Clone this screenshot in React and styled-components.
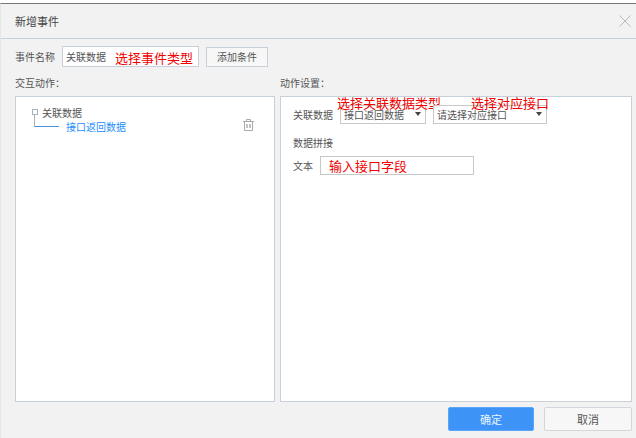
import styled, { createGlobalStyle } from "styled-components"

const cjk = `"Noto Sans CJK SC", "Liberation Sans", sans-serif`

const GlobalStyle = createGlobalStyle`
  html, body {
    margin: 0;
    padding: 0;
    background: #fff;
    font-family: ${cjk};
  }
`
const Dialog = styled.div`
  width: 636px;
  height: 438px;
  box-sizing: border-box;
  padding-top: 3px;
  background: #fff;
  overflow: hidden;
`
const Shell = styled.div`
  height: 435px;
  box-sizing: border-box;
  display: flex;
  flex-direction: column;
  background: #f2f2f2;
  border-top: 1px solid #777;
  border-left: 1px solid #e6e6e6;
`
const Header = styled.div`
  height: 35px;
  flex: none;
  box-sizing: border-box;
  display: flex;
  align-items: center;
  justify-content: space-between;
  padding: 0 4px 0 14px;
  border-bottom: 1px solid #c8d1da;
`
const Title = styled.div`
  font-size: 11px;
  color: #444;
`
const Body = styled.div`
  flex: 1;
  display: flex;
  flex-direction: column;
  padding: 7px 4px 0 14px;
  min-height: 0;
`
const NameRow = styled.div`
  display: flex;
  align-items: center;
  height: 21px;
  font-size: 10px;
  color: #555;
`
const NameLabel = styled.span`
  width: 47px;
`
const NameInput = styled.div`
  position: relative;
  width: 137px;
  height: 21px;
  box-sizing: border-box;
  display: flex;
  align-items: center;
  padding-left: 3px;
  background: #fff;
  border: 1px solid #c8d1da;
  margin-right: 7px;
`
const AddButton = styled.div`
  width: 62px;
  height: 20px;
  box-sizing: border-box;
  display: flex;
  align-items: center;
  justify-content: center;
  background: #f7f7f7;
  border: 1px solid #c8d1da;
`
const Columns = styled.div`
  flex: none;
  display: grid;
  grid-template-columns: 260px 352px;
  column-gap: 5px;
`
const Column = styled.div`
  display: flex;
  flex-direction: column;
`
const ColumnTitle = styled.div`
  height: 29px;
  display: flex;
  align-items: center;
  padding-top: 2px;
  box-sizing: border-box;
  font-size: 10px;
  color: #555;
`
const Panel = styled.div`
  height: 306px;
  box-sizing: border-box;
  background: #fff;
  border: 1px solid #c8d1da;
`
const TreePanel = styled(Panel)`
  padding: 8px 20px 0 16px;
`
const TreeRoot = styled.div`
  display: flex;
  align-items: center;
  height: 14px;
  font-size: 10px;
  color: #555;
`
const TreeNode = styled.span`
  width: 4px;
  height: 4px;
  border: 1px solid #aab2ba;
  margin-right: 4px;
`
const TreeChild = styled.div`
  display: flex;
  align-items: center;
  justify-content: space-between;
  height: 14px;
  font-size: 10px;
  color: #1f8fff;
`
const TreeChildLabel = styled.div`
  display: flex;
  align-items: center;
`
const TreeLine = styled.span`
  width: 24px;
  height: 12px;
  margin: 0 7px 11px 2px;
  border-left: 1px solid #aab2ba;
  border-bottom: 1px solid #4a90d9;
`
const TrashWrap = styled.span`
  display: flex;
  margin-bottom: 2px;
`
const SettingsPanel = styled(Panel)`
  padding: 8px 0 0 12px;
  font-size: 10px;
  color: #555;
`
const FieldRow = styled.div`
  display: flex;
  align-items: center;
  height: 19px;
`
const FieldLabel = styled.span`
  width: ${p => p.$width}px;
  flex: none;
`
const Select = styled.div`
  position: relative;
  width: ${p => p.$width}px;
  height: 19px;
  box-sizing: border-box;
  display: flex;
  align-items: center;
  padding-left: 3px;
  margin-right: 7px;
  background: #fff;
  border: 1px solid #c8c8c8;
  &::after {
    content: "";
    position: absolute;
    right: 4px;
    top: 6px;
    border-left: 3px solid transparent;
    border-right: 3px solid transparent;
    border-top: 4px solid #444;
  }
`
const SectionTitle = styled.div`
  height: 14px;
  line-height: 14px;
  margin: 12px 0 6px;
`
const TextField = styled.div`
  width: 154px;
  height: 19px;
  box-sizing: border-box;
  display: flex;
  align-items: center;
  padding-left: 8px;
  background: #fff;
  border: 1px solid #c8c8c8;
`
const Note = styled.span`
  color: #f00000;
  font-size: 13px;
  line-height: 16px;
  white-space: nowrap;
`
const FloatingNote = styled(Note)`
  position: absolute;
  left: ${p => p.$left}px;
  top: ${p => p.$top}px;
`
const Footer = styled.div`
  display: flex;
  justify-content: flex-end;
  gap: 10px;
  padding-top: 5px;
`
const FooterButton = styled.div`
  width: ${p => p.$primary ? 86 : 88}px;
  height: 24px;
  box-sizing: border-box;
  display: flex;
  align-items: center;
  justify-content: center;
  font-size: 11px;
  border-radius: 2px;
  color: ${p => p.$primary ? "#e8f3ff" : "#555"};
  background: ${p => p.$primary ? "#3d94f6" : "#f7f7f7"};
  border: 1px solid ${p => p.$primary ? "#5aa5f8" : "#d3d7db"};
`
const SettingsWrap = styled.div`
  position: relative;
`

function CloseIcon() {
  return (
    <svg width="14" height="14" viewBox="0 0 14 14" fill="none" stroke="#b4bac4" strokeWidth="1">
      <path d="M1.5 1.5 L12.5 12.5 M12.5 1.5 L1.5 12.5" />
    </svg>
  )
}

function TrashIcon() {
  return (
    <svg width="11" height="12" viewBox="0 0 11 12" fill="none" stroke="#a8a8a8" strokeWidth="1">
      <path d="M0 2.5 H11 M3.5 2.5 V0.5 H7.5 V2.5 M1.5 2.5 V11.5 H9.5 V2.5" />
      <path d="M4 5 V9 M7 5 V9" strokeWidth="1.4" />
    </svg>
  )
}

export default function App() {
  return (
    <>
      <GlobalStyle />
      <Dialog>
        <Shell>
          <Header>
            <Title>新增事件</Title>
            <CloseIcon />
          </Header>
          <Body>
            <NameRow>
              <NameLabel>事件名称</NameLabel>
              <NameInput>
                关联数据
                <FloatingNote $left={52} $top={3}>选择事件类型</FloatingNote>
              </NameInput>
              <AddButton>添加条件</AddButton>
            </NameRow>
            <Columns>
              <Column>
                <ColumnTitle>交互动作：</ColumnTitle>
                <TreePanel>
                  <TreeRoot><TreeNode />关联数据</TreeRoot>
                  <TreeChild>
                    <TreeChildLabel><TreeLine />接口返回数据</TreeChildLabel>
                    <TrashWrap><TrashIcon /></TrashWrap>
                  </TreeChild>
                </TreePanel>
              </Column>
              <Column>
                <ColumnTitle>动作设置：</ColumnTitle>
                <SettingsPanel>
                  <FieldRow>
                    <FieldLabel $width={47}>关联数据</FieldLabel>
                    <SettingsWrap>
                      <Select $width={86}>接口返回数据</Select>
                      <FloatingNote $left={-3} $top={-10}>选择关联数据类型</FloatingNote>
                    </SettingsWrap>
                    <SettingsWrap>
                      <Select $width={114}>请选择对应接口</Select>
                      <FloatingNote $left={38} $top={-10}>选择对应接口</FloatingNote>
                    </SettingsWrap>
                  </FieldRow>
                  <SectionTitle>数据拼接</SectionTitle>
                  <FieldRow>
                    <FieldLabel $width={27}>文本</FieldLabel>
                    <TextField><Note>输入接口字段</Note></TextField>
                  </FieldRow>
                </SettingsPanel>
              </Column>
            </Columns>
            <Footer>
              <FooterButton $primary>确定</FooterButton>
              <FooterButton>取消</FooterButton>
            </Footer>
          </Body>
        </Shell>
      </Dialog>
    </>
  )
}
